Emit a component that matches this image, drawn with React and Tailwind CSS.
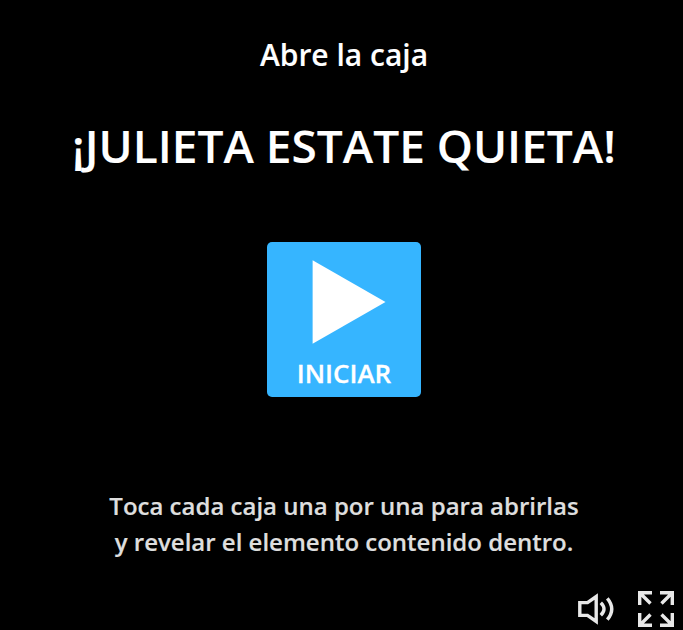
export default function App() {
  return (
    <main className="flex h-[630px] w-[683px] flex-col overflow-hidden bg-black pl-[5px] text-center font-['Open_Sans',sans-serif] font-semibold text-white antialiased">
      <h2 className="mt-[34px] text-[30px] leading-[42px] [-webkit-text-stroke:0.1px_currentColor]">Abre la caja</h2>
      <h1 className="mt-[37px] text-[46px] leading-[64px] whitespace-nowrap [-webkit-text-stroke:0.1px_currentColor]">¡JULIETA ESTATE QUIETA!</h1>
      <button className="mt-[65px] flex h-[155px] w-[154px] flex-col items-center self-center rounded-[5px] bg-[#36b5ff] pt-[18px]">
        <svg className="ml-[10px] h-[84px] w-[74px] shrink-0" viewBox="0 0 74 84" fill="currentColor"><path d="M0.6 0.3L73.5 42L0.6 83.8Z" /></svg>
        <span className="mt-[11px] text-[26px] leading-[36px] [-webkit-text-stroke:0.3px_currentColor]">INICIAR</span>
      </button>
      <p className="mt-[91px] text-[24px] leading-[36px] text-[#dedede] [-webkit-text-stroke:0.2px_currentColor]">Toca cada caja una por una para abrirlas<br />y revelar el elemento contenido dentro.</p>
      <div className="mt-auto flex h-[42px] items-start justify-end gap-[22px] pr-[9px] text-[#e8e8e8]">
        <svg className="mt-[5px] h-[32px] w-[38px]" viewBox="0 0 38 32" fill="none" stroke="currentColor" strokeWidth="3.4"><path d="M1.8 9.6H9.5L18.2 3.5V28.5L9.5 22.4H1.8Z M22.8 9.7Q29.2 16 22.8 22.3 M29.3 5.3Q38.2 16 29.3 26.7" /></svg>
        <svg className="mt-[3px] h-[36px] w-[36px]" viewBox="0 0 36 36" fill="none" stroke="currentColor" strokeWidth="3.4"><path d="M1.7 14V1.7H14M1.7 1.7L12.5 12.5M22 1.7H34.3V14M34.3 1.7L23.5 12.5M1.7 22V34.3H14M1.7 34.3L12.5 23.5M22 34.3H34.3V22M34.3 34.3L23.5 23.5" /></svg>
      </div>
    </main>
  );
}
